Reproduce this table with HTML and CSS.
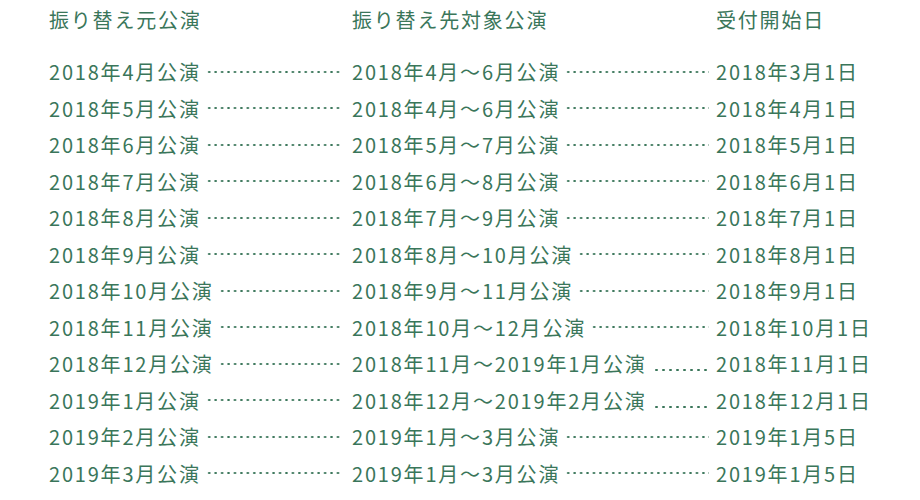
FILE: index.html
```html
<!DOCTYPE html>
<html lang="ja">
<head>
<meta charset="utf-8">
<link rel="stylesheet" href="styles.css">
</head>
<body>
<div class="table">
  <div class="row head">
    <div class="c1">振り替え元公演</div>
    <div class="c2">振り替え先対象公演</div>
    <div class="c3">受付開始日</div>
  </div>
  <div class="row"><div class="c1"><span>2018年4月公演</span><i class="dots"></i></div><div class="c2"><span>2018年4月〜6月公演</span><i class="dots"></i></div><div class="c3">2018年3月1日</div></div>
  <div class="row"><div class="c1"><span>2018年5月公演</span><i class="dots"></i></div><div class="c2"><span>2018年4月〜6月公演</span><i class="dots"></i></div><div class="c3">2018年4月1日</div></div>
  <div class="row"><div class="c1"><span>2018年6月公演</span><i class="dots"></i></div><div class="c2"><span>2018年5月〜7月公演</span><i class="dots"></i></div><div class="c3">2018年5月1日</div></div>
  <div class="row"><div class="c1"><span>2018年7月公演</span><i class="dots"></i></div><div class="c2"><span>2018年6月〜8月公演</span><i class="dots"></i></div><div class="c3">2018年6月1日</div></div>
  <div class="row"><div class="c1"><span>2018年8月公演</span><i class="dots"></i></div><div class="c2"><span>2018年7月〜9月公演</span><i class="dots"></i></div><div class="c3">2018年7月1日</div></div>
  <div class="row"><div class="c1"><span>2018年9月公演</span><i class="dots"></i></div><div class="c2"><span>2018年8月〜10月公演</span><i class="dots"></i></div><div class="c3">2018年8月1日</div></div>
  <div class="row"><div class="c1"><span>2018年10月公演</span><i class="dots"></i></div><div class="c2"><span>2018年9月〜11月公演</span><i class="dots"></i></div><div class="c3">2018年9月1日</div></div>
  <div class="row"><div class="c1"><span>2018年11月公演</span><i class="dots"></i></div><div class="c2"><span>2018年10月〜12月公演</span><i class="dots"></i></div><div class="c3">2018年10月1日</div></div>
  <div class="row"><div class="c1"><span>2018年12月公演</span><i class="dots"></i></div><div class="c2"><span>2018年11月〜2019年1月公演</span><i class="dots wide"></i></div><div class="c3">2018年11月1日</div></div>
  <div class="row"><div class="c1"><span>2019年1月公演</span><i class="dots"></i></div><div class="c2"><span>2018年12月〜2019年2月公演</span><i class="dots wide"></i></div><div class="c3">2018年12月1日</div></div>
  <div class="row"><div class="c1"><span>2019年2月公演</span><i class="dots"></i></div><div class="c2"><span>2019年1月〜3月公演</span><i class="dots"></i></div><div class="c3">2019年1月5日</div></div>
  <div class="row"><div class="c1"><span>2019年3月公演</span><i class="dots"></i></div><div class="c2"><span>2019年1月〜3月公演</span><i class="dots"></i></div><div class="c3">2019年1月5日</div></div>
</div>
</body>
</html>
```
FILE: styles.css
```css
html, body {
  margin: 0;
  padding: 0;
  background: #ffffff;
}
body {
  font-family: "Noto Sans CJK JP", "Noto Sans", sans-serif;
  font-size: 20px;
  font-weight: 400;
  letter-spacing: 1.8px;
  color: #3a765a;
}
.table {
  padding: 2px 0 0 49px;
}
.row {
  display: grid;
  grid-template-columns: 303px 364px 1fr;
  height: 36.5px;
  line-height: 36.5px;
  white-space: nowrap;
}
.row.head {
  margin-bottom: 15.5px;
}
.c1, .c2 {
  display: flex;
  align-items: center;
}
.dots {
  flex: 1;
  height: 4px;
  margin: 0 10px 0 5px;
  background-image: radial-gradient(circle, #3a765a 0.9px, transparent 1.4px);
  background-size: 6.45px 4px;
  background-repeat: repeat-x;
  background-position: left center;
  position: relative;
  top: -0.5px;
}
.c2 .dots {
  margin-right: 7px;
}
.dots.wide {
  background-size: 7px 4px;
  background-image: radial-gradient(circle, #3a765a 1px, transparent 1.5px);
  margin-left: 6px;
  margin-right: 7px;
  top: 6px;
}
```
